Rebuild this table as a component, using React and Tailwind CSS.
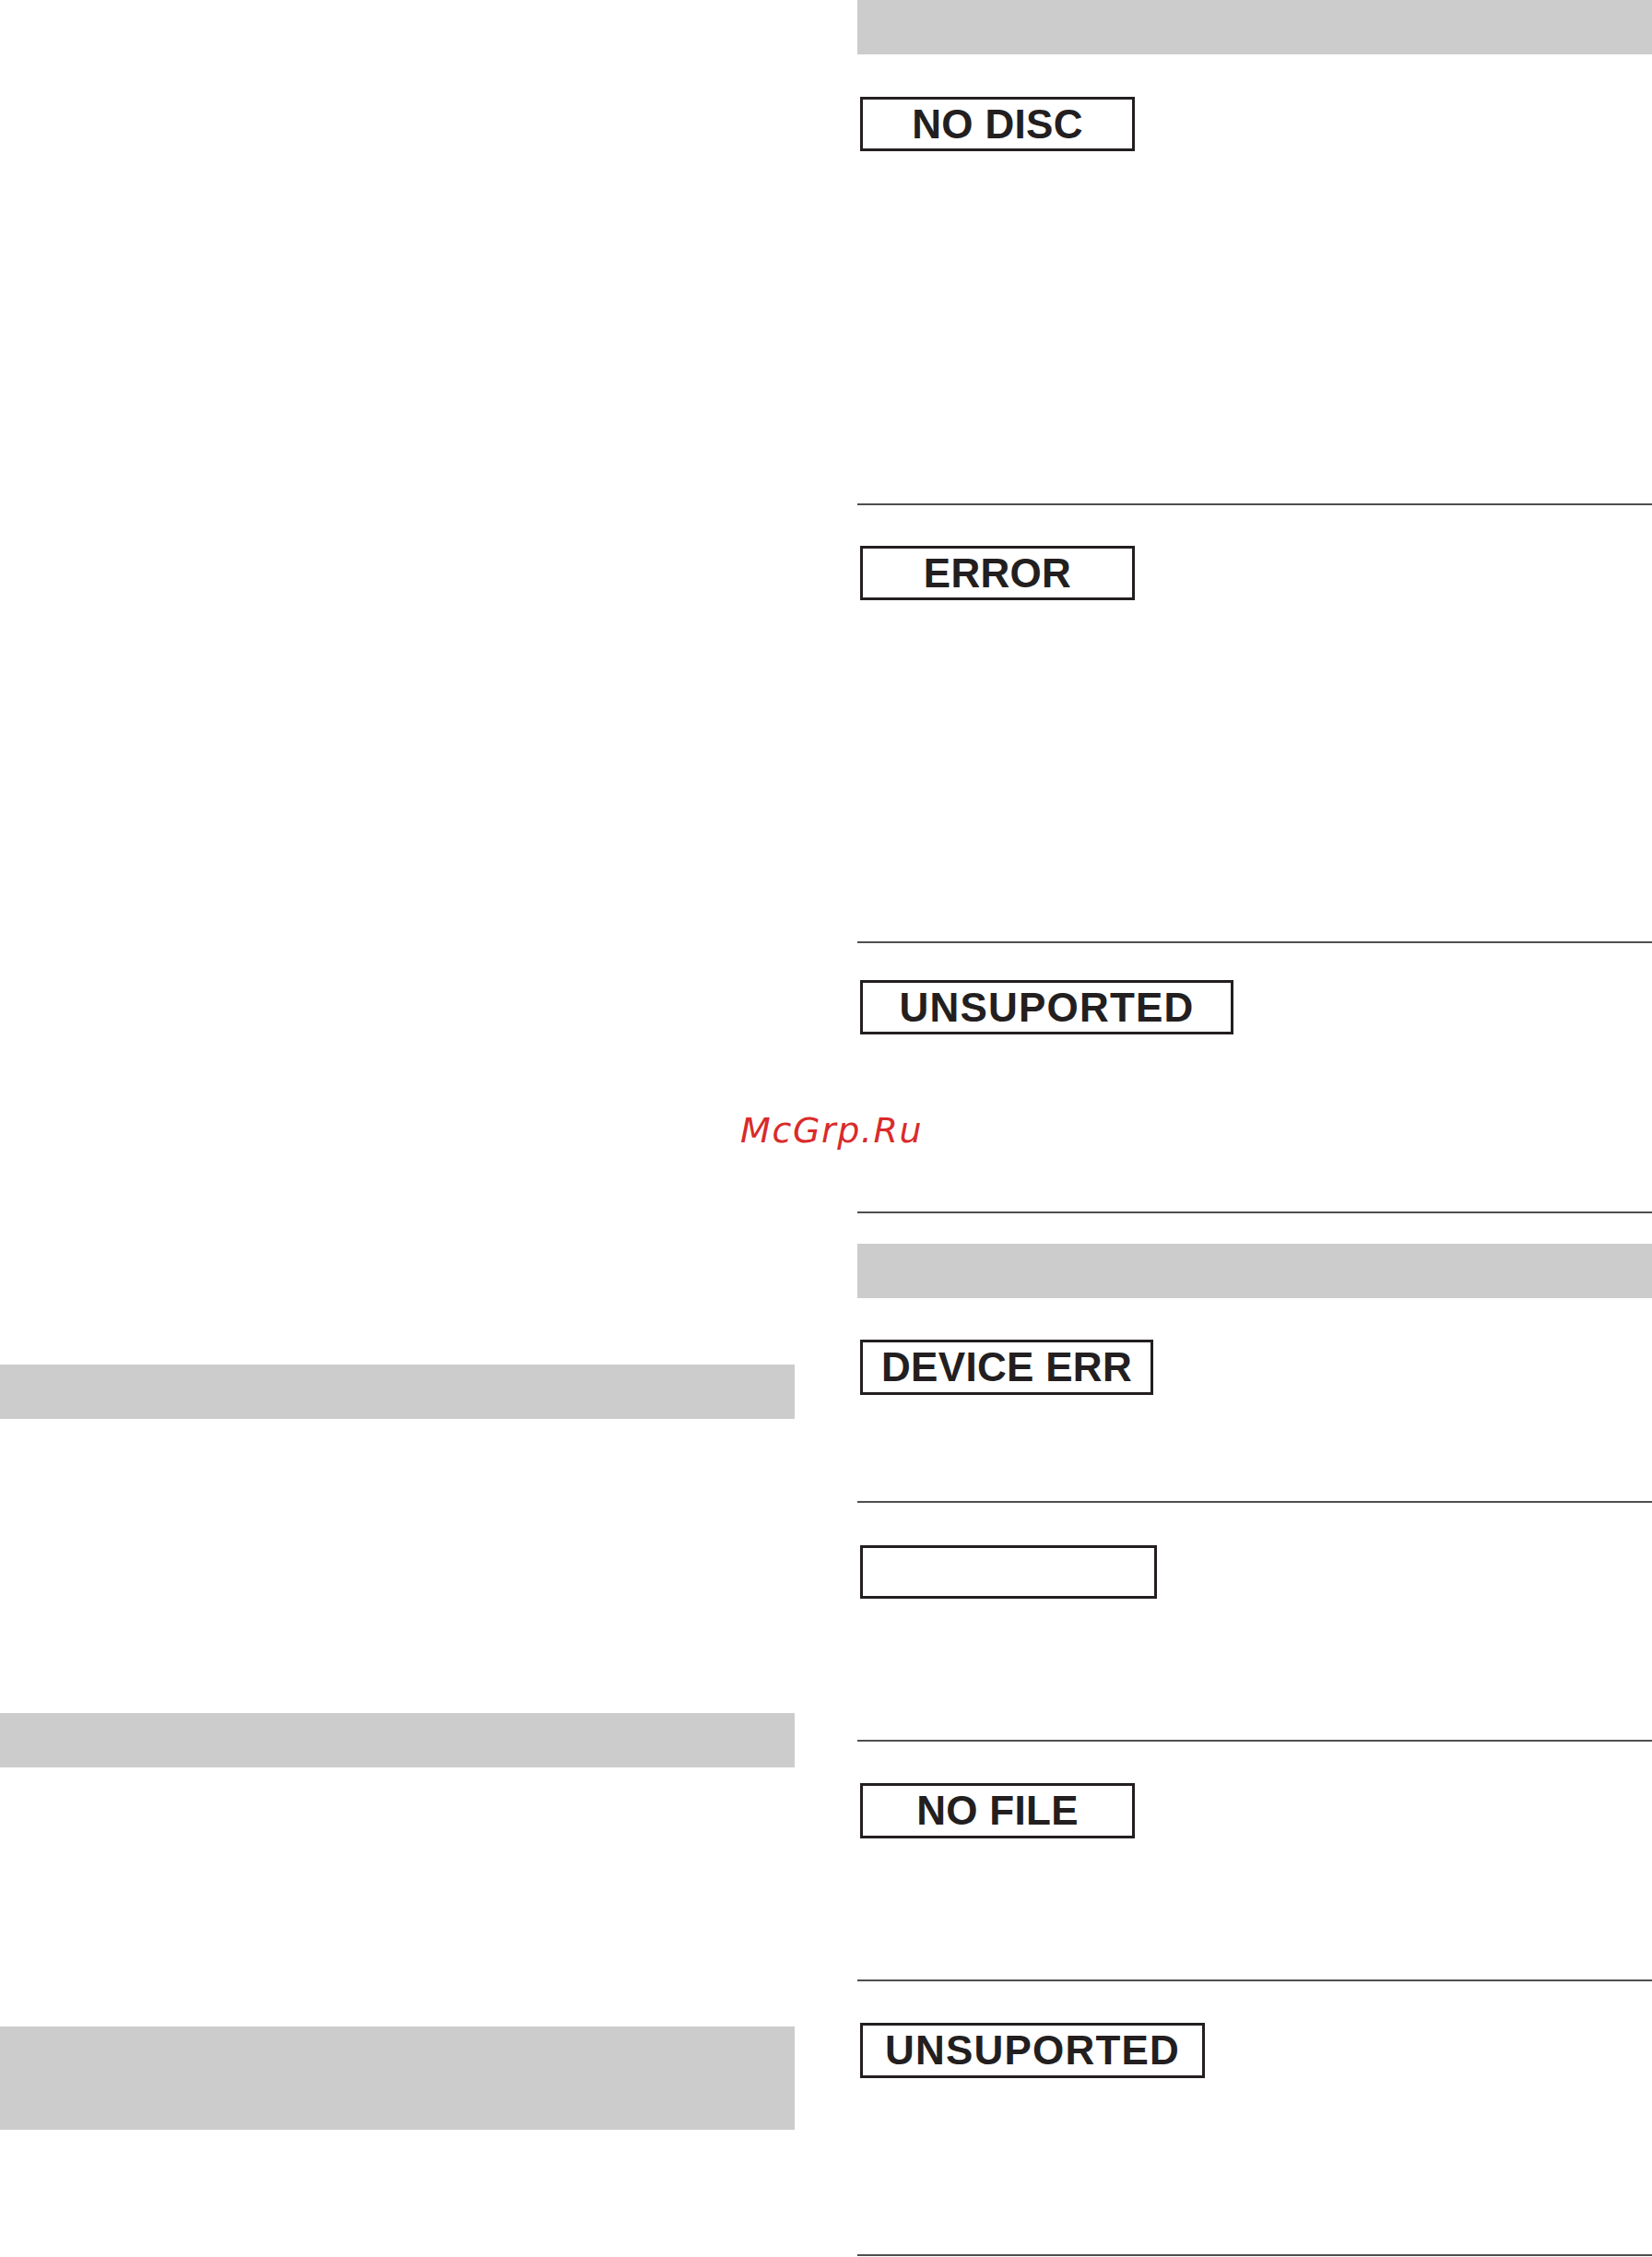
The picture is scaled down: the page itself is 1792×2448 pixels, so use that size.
import React from "react";

const Label = ({ text, width, height = "h-[60px]", wide = false }) => (
  <div
    className={`ml-[3px] flex ${height} items-center justify-center border-[3px] border-[#231f20] bg-white`}
    style={{ width }}
  >
    {text && (
      <span
        className={`font-['Liberation_Sans',Arial,sans-serif] text-[44px] leading-none font-bold text-[#231f20] ${
          wide ? "tracking-[1.2px]" : "tracking-[0.3px]"
        }`}
      >
        {text}
      </span>
    )}
  </div>
);

const Rule = ({ className }) => <div className={`h-[2px] bg-[#4f4f4f] ${className}`} />;

const App = () => {
  return (
    <div className="relative h-[2448px] w-[1792px] overflow-hidden bg-white">
      <div className="flex gap-[68px]">
        {/* left column */}
        <div className="flex w-[862px] flex-col">
          <div className="mt-[1480px] h-[59px] bg-[#cccccc]" />
          <div className="mt-[319px] h-[59px] bg-[#cccccc]" />
          <div className="mt-[281px] h-[112px] bg-[#cccccc]" />
        </div>

        {/* right column */}
        <div className="flex w-[862px] flex-col">
          <div className="h-[59px] bg-[#cccccc]" />
          <div className="mt-[46px]">
            <Label text="NO DISC" width="298px" height="h-[59px]" />
          </div>
          <Rule className="mt-[382px]" />
          <div className="mt-[44px]">
            <Label text="ERROR" width="298px" height="h-[59px]" />
          </div>
          <Rule className="mt-[370px]" />
          <div className="mt-[40px]">
            <Label text="UNSUPORTED" width="405px" height="h-[59px]" wide />
          </div>
          <Rule className="mt-[192px]" />
          <div className="mt-[33px] h-[59px] bg-[#cccccc]" />
          <div className="mt-[45px]">
            <Label text="DEVICE ERR" width="318px" />
          </div>
          <Rule className="mt-[115px]" />
          <div className="mt-[46px]">
            <Label text="" width="322px" height="h-[58px]" />
          </div>
          <Rule className="mt-[153px]" />
          <div className="mt-[45px]">
            <Label text="NO FILE" width="298px" />
          </div>
          <Rule className="mt-[153px]" />
          <div className="mt-[45px]">
            <Label text="UNSUPORTED" width="374px" wide />
          </div>
          <Rule className="mt-[191px]" />
        </div>
      </div>

      {/* watermark */}
      <div className="absolute left-[803px] top-[1207px] font-['DejaVu_Sans',Verdana,sans-serif] text-[38px] leading-none italic tracking-[1.6px] text-[#d92b2b]">
        McGrp.Ru
      </div>
    </div>
  );
};

export default App;
